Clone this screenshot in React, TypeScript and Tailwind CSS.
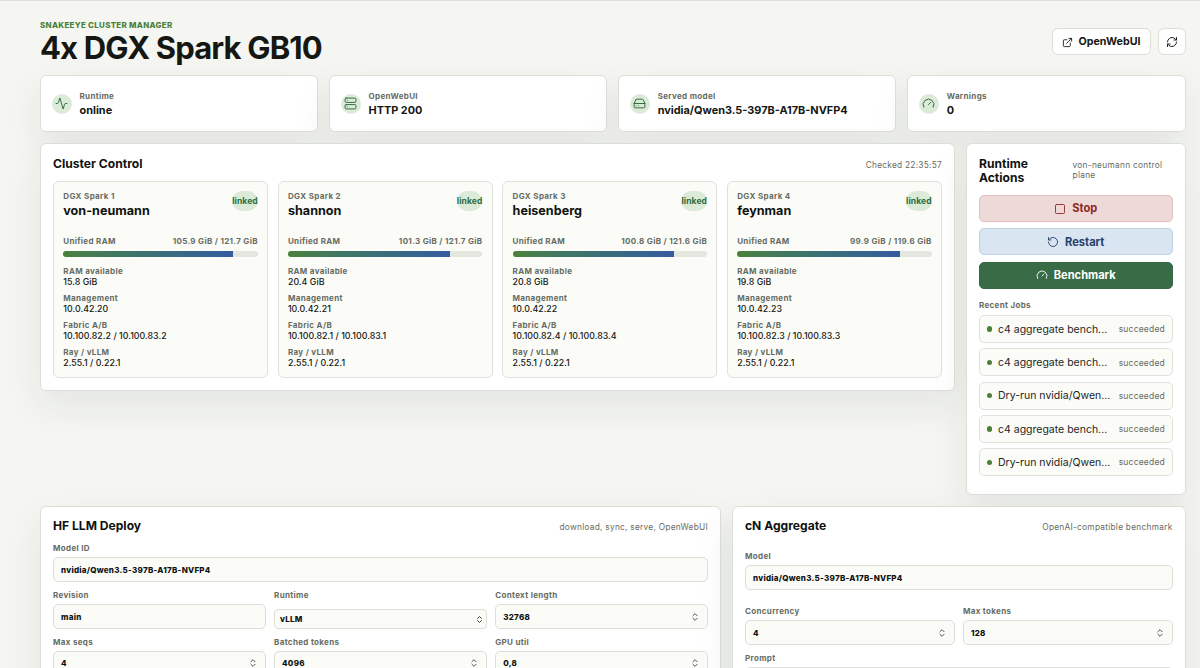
import React from "react";
import {
  Activity,
  ChevronsUpDown,
  ExternalLink,
  Gauge,
  HardDrive,
  RefreshCw,
  RotateCcw,
  Server,
  Square,
} from "lucide-react";
import type { LucideIcon } from "lucide-react";

interface Stat {
  label: string;
  value: string;
  icon: LucideIcon;
}

interface ClusterNode {
  title: string;
  host: string;
  used: number;
  total: number;
  available: string;
  management: string;
  fabric: string;
}

const stats: Stat[] = [
  { label: "Runtime", value: "online", icon: Activity },
  { label: "OpenWebUI", value: "HTTP 200", icon: Server },
  { label: "Served model", value: "nvidia/Qwen3.5-397B-A17B-NVFP4", icon: HardDrive },
  { label: "Warnings", value: "0", icon: Gauge },
];

const nodes: ClusterNode[] = [
  {
    title: "DGX Spark 1",
    host: "von-neumann",
    used: 105.9,
    total: 121.7,
    available: "15.8 GiB",
    management: "10.0.42.20",
    fabric: "10.100.82.2 / 10.100.83.2",
  },
  {
    title: "DGX Spark 2",
    host: "shannon",
    used: 101.3,
    total: 121.7,
    available: "20.4 GiB",
    management: "10.0.42.21",
    fabric: "10.100.82.1 / 10.100.83.1",
  },
  {
    title: "DGX Spark 3",
    host: "heisenberg",
    used: 100.8,
    total: 121.6,
    available: "20.8 GiB",
    management: "10.0.42.22",
    fabric: "10.100.82.4 / 10.100.83.4",
  },
  {
    title: "DGX Spark 4",
    host: "feynman",
    used: 99.9,
    total: 119.6,
    available: "19.8 GiB",
    management: "10.0.42.23",
    fabric: "10.100.82.3 / 10.100.83.3",
  },
];

const jobs = [
  "c4 aggregate bench...",
  "c4 aggregate bench...",
  "Dry-run nvidia/Qwen...",
  "c4 aggregate bench...",
  "Dry-run nvidia/Qwen...",
];

const panel =
  "rounded-[6px] border border-[#dcdfd8] bg-white/96 shadow-[0_15px_38px_rgba(30,38,28,0.08)]";
const label = "text-[8px] leading-[11px] font-bold tracking-[0.33px] text-[#666c63]";

function StatCard({ label: name, value, icon: Icon }: Stat) {
  return (
    <div className={`${panel} flex h-[57px] items-center gap-2 px-[10.5px]`}>
      <span className="flex size-5 items-center justify-center rounded-full bg-[#dcebd8] text-[#2f6b3f]">
        <Icon size={13} strokeWidth={1.8} />
      </span>
      <div className="pt-px">
        <div className={label}>{name}</div>
        <div className="mt-px text-[10.9px] leading-[14px] font-bold text-[#151713]">{value}</div>
      </div>
    </div>
  );
}

function Detail({ name, value }: { name: string; value: string }) {
  return (
    <div className="h-[27px]">
      <div className={label}>{name}</div>
      <div className="text-[8.8px] leading-[10px] font-medium tracking-[0.04px] text-[#151713]">{value}</div>
    </div>
  );
}

function NodeCard({ node }: { node: ClusterNode }) {
  return (
    <article className="h-[197px] rounded-[6px] border border-[#dfe1db] bg-[#fbfcf8] px-[9.3px] pt-[9px]">
      <div className="flex h-[45px] items-start justify-between">
        <div>
          <div className={label}>{node.title}</div>
          <h3 className="text-[12.6px] leading-[17px] font-bold text-[#10120f]">{node.host}</h3>
        </div>
        <span className="flex h-5 items-center rounded-full bg-[#dcebd8] pt-px text-[8.5px] font-bold tracking-[0.1px] text-[#2f6b3f]">
          linked
        </span>
      </div>
      <div className="flex justify-between">
        <span className={label}>Unified RAM</span>
        <span className={label}>
          {node.used.toFixed(1)} GiB / {node.total.toFixed(1)} GiB
        </span>
      </div>
      <div className="mt-[4px] mb-[9px] h-[6px] overflow-hidden rounded-full bg-[#e4e7e0]">
        <div
          className="h-full bg-linear-to-r from-[#4b803a] to-[#365ba0]"
          style={{ width: `${(node.used / node.total) * 100}%` }}
        />
      </div>
      <Detail name="RAM available" value={node.available} />
      <Detail name="Management" value={node.management} />
      <Detail name="Fabric A/B" value={node.fabric} />
      <Detail name="Ray / vLLM" value="2.55.1 / 0.22.1" />
    </article>
  );
}

function PanelHead({ title, note }: { title: string; note: string }) {
  return (
    <div className="flex items-center justify-between">
      <h2 className="text-[12.1px] leading-[14px] font-bold text-[#10120f]">{title}</h2>
      <span className="pt-[2px] text-[8.3px] leading-[10px] tracking-[0.27px] text-[#666c63]">{note}</span>
    </div>
  );
}

interface FieldProps {
  name: string;
  value: string;
  stepper?: boolean;
}

function Field({ name, value, stepper }: FieldProps) {
  return (
    <label className="block min-w-0">
      <span className={`block ${label}`}>{name}</span>
      <span className="mt-[3px] flex h-[25px] items-center rounded-[5px] border border-[#dcdfd8] bg-[#fbfcf8] px-[7px]">
        <input
          defaultValue={value}
          className="w-full min-w-0 bg-transparent text-[8px] font-extrabold tracking-[0.26px] text-[#10120f] outline-none"
        />
        {stepper && <ChevronsUpDown size={10} strokeWidth={2.4} className="shrink-0 text-[#555]" />}
      </span>
    </label>
  );
}

function SelectField({ name, value }: FieldProps) {
  return (
    <div className="min-w-0">
      <div className={label}>{name}</div>
      <button className="mt-[8px] flex h-[20px] w-full items-center justify-between rounded-[4px] border border-[#dcdfd8] bg-[#fbfcf8] pr-[2px] pl-[5px] text-[8px] font-extrabold tracking-[0.2px] text-[#10120f]">
        {value}
        <ChevronsUpDown size={9} strokeWidth={2.6} className="text-[#333]" />
      </button>
    </div>
  );
}

export default function App() {
  return (
    <main className="h-[668px] overflow-hidden border-t border-[#dfe0dc] bg-[#f5f6f2] pr-[14.5px] pl-[40px] font-['Inter','Liberation_Sans',sans-serif] text-[#151713]">
      <header className="flex h-[74px] items-start justify-between pt-[18px]">
        <div>
          <div className="pt-px text-[7.9px] leading-[11px] font-extrabold tracking-[0.32px] text-[#4b803a]">
            SNAKEEYE CLUSTER MANAGER
          </div>
          <h1 className="-mt-px text-[31px] leading-[36px] font-bold tracking-[-0.85px] text-[#151713]">
            4x DGX Spark GB10
          </h1>
        </div>
        <div className="mt-[9px] flex gap-[7px]">
          <button className="flex h-[27px] w-[99px] items-center justify-center gap-[6px] rounded-[6px] border border-[#dcdfd8] bg-white pt-px text-[10.7px] font-bold">
            <ExternalLink size={11} strokeWidth={1.9} />
            OpenWebUI
          </button>
          <button aria-label="Refresh" className="flex h-[27px] w-[28px] items-center justify-center rounded-[6px] border border-[#dcdfd8] bg-white">
            <RefreshCw size={12} strokeWidth={1.9} />
          </button>
        </div>
      </header>

      <section className="grid grid-cols-4 gap-[10.8px]">
        {stats.map((stat) => (
          <StatCard key={stat.label} {...stat} />
        ))}
      </section>

      <div className="mt-[11px] grid grid-cols-[915px_1fr] items-start gap-[11px]">
        <section className={`${panel} h-[248px] px-[12px] pt-[12.5px]`}>
          <PanelHead title="Cluster Control" note="Checked 22:35:57" />
          <div className="mt-[10.5px] grid grid-cols-4 gap-[9.5px]">
            {nodes.map((node) => (
              <NodeCard key={node.host} node={node} />
            ))}
          </div>
        </section>

        <section className={`${panel} h-[352px] px-[12px] pt-[12.5px]`}>
          <div className="flex items-center justify-between">
            <h2 className="w-[60px] text-[12.1px] leading-[14px] font-bold text-[#10120f]">Runtime Actions</h2>
            <span className="-mt-[2px] w-[100px] text-[8.3px] leading-[10px] tracking-[0.3px] text-[#666c63]">
              von-neumann control plane
            </span>
          </div>
          <div className="mt-[10.5px] grid gap-[6.3px] text-[11.1px] font-bold">
            <button className="flex h-[27px] items-center justify-center gap-[6px] rounded-[5px] border border-[#e3bfbf] bg-[#edd9d8] text-[#8f2724]">
              <Square size={12} strokeWidth={1.8} />
              Stop
            </button>
            <button className="flex h-[27px] items-center justify-center gap-[6px] rounded-[5px] border border-[#bfd1e6] bg-[#d9e5f1] pt-px text-[#24416e]">
              <RotateCcw size={12} strokeWidth={1.8} />
              Restart
            </button>
            <button className="flex h-[27px] items-center justify-center gap-[6px] rounded-[5px] border border-[#356a45] bg-[#386b46] text-white">
              <Gauge size={12} strokeWidth={1.8} />
              Benchmark
            </button>
          </div>
          <div className={`${label} mt-[11px]`}>Recent Jobs</div>
          <ul className="mt-[4.5px] grid gap-[5.3px]">
            {jobs.map((job, i) => (
              <li
                key={i}
                className="flex h-[28px] items-center rounded-[5px] border border-[#dfe1db] bg-[#fbfcf8] px-[6.5px]"
              >
                <span className="mr-[6px] size-[5.5px] shrink-0 rounded-full bg-[#4b803a]" />
                <span className="flex-1 pt-px text-[10.5px] whitespace-nowrap text-[#22251f]">{job}</span>
                <span className="pt-px text-[8.5px] tracking-[0.2px] text-[#666c63]">succeeded</span>
              </li>
            ))}
          </ul>
        </section>
      </div>

      <div className="mt-[11px] grid grid-cols-[681px_1fr] gap-[11px]">
        <section className={`${panel} h-[260px] px-[12px] pt-[12px]`}>
          <PanelHead title="HF LLM Deploy" note="download, sync, serve, OpenWebUI" />
          <div className="mt-[10px]">
            <Field name="Model ID" value="nvidia/Qwen3.5-397B-A17B-NVFP4" />
          </div>
          <div className="mt-[8px] grid grid-cols-3 gap-x-[8.3px] gap-y-[7.5px]">
            <Field name="Revision" value="main" />
            <SelectField name="Runtime" value="vLLM" />
            <Field name="Context length" value="32768" stepper />
            <Field name="Max seqs" value="4" stepper />
            <Field name="Batched tokens" value="4096" stepper />
            <Field name="GPU util" value="0,8" stepper />
          </div>
        </section>

        <section className={`${panel} h-[260px] px-[12px] pt-[12px]`}>
          <PanelHead title="cN Aggregate" note="OpenAI-compatible benchmark" />
          <div className="mt-[18px]">
            <Field name="Model" value="nvidia/Qwen3.5-397B-A17B-NVFP4" />
          </div>
          <div className="mt-[16px] grid grid-cols-2 gap-x-[8.3px]">
            <Field name="Concurrency" value="4" stepper />
            <Field name="Max tokens" value="128" stepper />
          </div>
          <div className="mt-[7.5px]">
            <div className={label}>Prompt</div>
            <textarea className="mt-[3px] block h-[60px] w-full resize-none rounded-[5px] border border-[#dcdfd8] bg-[#fbfcf8]" />
          </div>
        </section>
      </div>
    </main>
  );
}
